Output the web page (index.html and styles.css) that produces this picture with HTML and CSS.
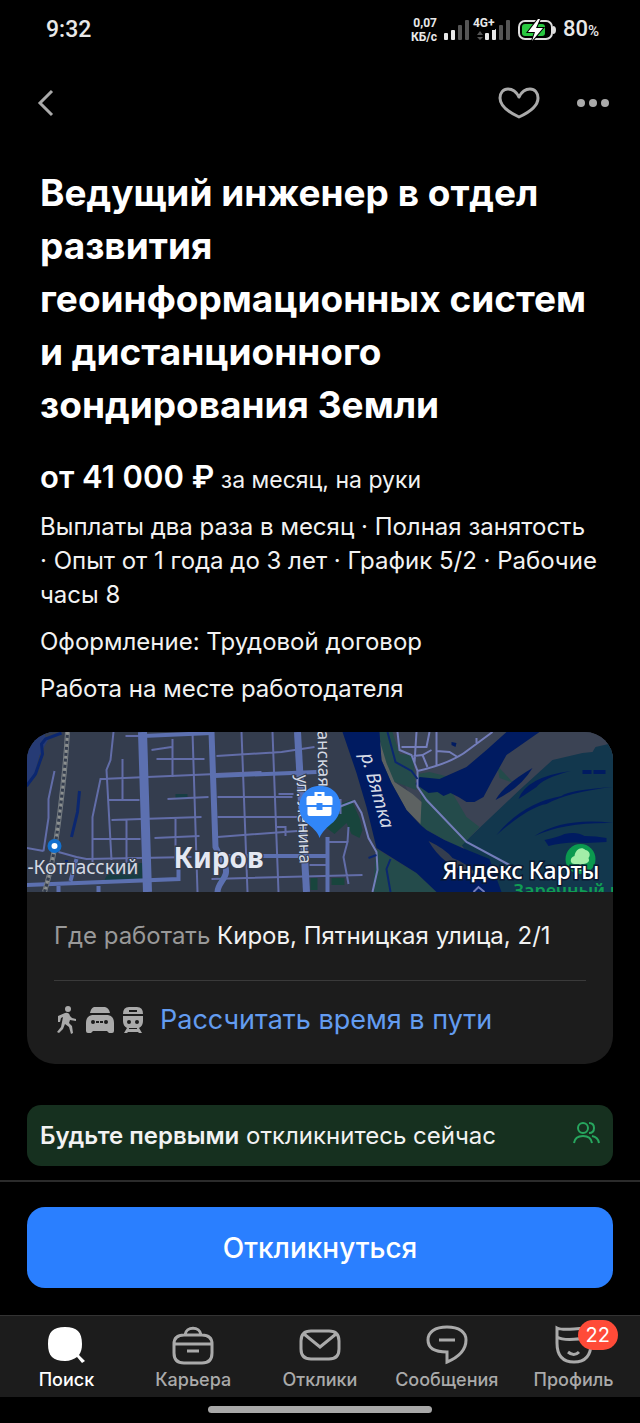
FILE: index.html
```html
<!DOCTYPE html>
<html lang="ru">
<head>
    <meta charset="UTF-8">
    <meta name="viewport" content="width=device-width, initial-scale=1.0">
    <title>Вакансия</title>
    <link rel="stylesheet" href="styles.css">
</head>
<body>
    <!-- status bar -->
    <div class="status">
        <div class="time">9:32</div>
        <div class="status-right">
            <div class="speed">0,07<br>КБ/с</div>
            <svg class="signal" width="26" height="21" viewBox="0 0 26 21">
                <g fill="#e8e8e8"><rect x="0" y="13" width="4" height="7" rx="1"/><rect x="7" y="10" width="4" height="10" rx="1"/></g>
                <g fill="#555"><rect x="14" y="5" width="4" height="15" rx="1"/><rect x="21" y="0" width="4" height="20" rx="1"/></g>
            </svg>
            <div class="lte">
                <span class="lte-label">4G+</span>
                <svg width="34" height="21" viewBox="0 0 34 21">
                    <path d="M0 15l3-4 3 4zM0 17h6l-3 3z" fill="#555"/>
                    <g fill="#e8e8e8"><rect x="8" y="13" width="4" height="7" rx="1"/><rect x="15" y="9" width="4" height="11" rx="1"/></g>
                    <g fill="#555"><rect x="22" y="5" width="4" height="15" rx="1"/><rect x="29" y="0" width="4" height="20" rx="1"/></g>
                </svg>
            </div>
            <svg width="38" height="22" viewBox="0 0 38 22">
                <rect x="1" y="2" width="33" height="18" rx="6" fill="none" stroke="#ddd" stroke-width="2"/>
                <rect x="4" y="5" width="23" height="12" rx="3" fill="#28c840"/>
                <path d="M35 7q3 0 3 4t-3 4z" fill="#ddd"/>
                <path d="M20 0L10 13h7l-3 9 11-13h-7l4-9z" fill="#fff" stroke="#000" stroke-width="2" paint-order="stroke"/>
            </svg>
            <div class="battery">80<small>%</small></div>
        </div>
    </div>

    <!-- header -->
    <header class="topbar">
        <button class="icon-btn" aria-label="Назад">
            <svg width="18" height="28" viewBox="0 0 18 28"><path d="M16 2L4 14l12 12" fill="none" stroke="#aaa" stroke-width="3"/></svg>
        </button>
        <div class="topbar-actions">
            <button class="icon-btn" aria-label="В избранное">
                <svg width="42" height="32" viewBox="0 0 42 32"><path d="M21 10C18 4 14 2 10 2C5 2 2 6 2 11C2 19 10 25 21 30C32 25 40 19 40 11C40 6 37 2 32 2C28 2 24 4 21 10z" fill="none" stroke="#aaa" stroke-width="3" stroke-linejoin="round"/></svg>
            </button>
            <button class="icon-btn" aria-label="Ещё">
                <svg width="32" height="8" viewBox="0 0 32 8" fill="#aaa"><circle cx="4" cy="4" r="4"/><circle cx="16" cy="4" r="4"/><circle cx="28" cy="4" r="4"/></svg>
            </button>
        </div>
    </header>

    <main>
        <section class="info">
            <h1>Ведущий инженер в отдел развития геоинформационных систем и дистанционного зондирования Земли</h1>
            <p class="salary"><strong>от 41 000 ₽</strong> за месяц, на руки</p>
            <p>Выплаты два раза в месяц · Полная занятость ·&nbsp;Опыт от 1 года до 3 лет · График 5/2 · Рабочие часы 8</p>
            <p>Оформление: Трудовой договор</p>
            <p>Работа на месте работодателя</p>
        </section>

        <section class="card">
            <svg class="map" viewBox="0 0 587 160" preserveAspectRatio="xMidYMid slice">
                <rect width="587" height="160" fill="#343d4e"/>
                <path d="M0 0h26L13 23 8 42 0 53z" fill="#263b75"/>
                <path d="M17 0h30L20 7z" fill="#343d4e"/>
                <g fill="none" stroke="#0b2770" stroke-width="3">
                    <path d="M35 1L19 7 15 12 16 22 9 42 0 54"/>
                    <path d="M53 59L51 80 45 105M40 128v6"/>
                </g>
                <path d="M82 140l12-8 22-1v17H78zM149 62h12v4h-12z" fill="#173d43"/>

                <!-- right bank -->
                <path d="M353 0H587V160H460L400 98z" fill="#3b4354"/>
                <path d="M587 11l-18 4-3 5-10 1-30 7-33 30-58 55 35 47h117z" fill="#12374d"/>
                <path d="M471 34l16 17-14-5z" fill="#244b4b"/>
                <path d="M391 42l12-2 20 5-10 4 14 14 13 22 13 10-20 21-33-18-7-6 2-21z" fill="#244b4b"/>
                <path d="M353 0h13l7 22 13 1 4 35-27-10-8-23z" fill="#244b4b"/>
                <path d="M353 8l7 23 8 19 18 12 9 8-1 22-14-14-15-27-10-23z" fill="#5d6262"/>
                <!-- left bank park -->
                <path d="M346 160l4-43 40 24 20 19z" fill="#244b4b"/>
                <!-- river -->
                <path d="M316 0h37l2 28 10 23 15 27 13 14 7 6 18 10 18 8 27 11 12 33h-65l-20-19-40-25-10-41-10-34z" fill="#001b61"/>
                <path d="M480 0h33l-33 23-14 25-9 17-9 5h-8l-8-5-8-4-7 3-6-4-9 1-13-9 4-7 20 2 27-12 20-17z" fill="#001b61"/>
                <path d="M469 68q8-15 37-32-12 20-37 32zM492 67q8-22 52-28-27 7-34 16zM470 103q26-32 65-39 7-6 52-9-45 5-67 17-18 3-50 31zM508 104q30-19 79-13-49-1-79 13zM518 108q14-3 20-6 12-3 20 2 12 0 22 2v4l-20 1q-20-2-38 3zM556 38h9v4h-9zM567 38h12v4h-12zM425 10l5 1-1 4-4-2z" fill="#001b61"/>
                <path d="M402 109q17 8 24 17 14 5 25 17-20-5-32-14-10-8-17-20z" fill="#343d4e"/>
                <path d="M299 95l3-19 23-8 8 18 3 12-3 8-8-4-5-11-12 11z" fill="#18453d"/>
                <path d="M284 146h7v12h-7zM192 145l9-3v5l-9 10zM305 146h13v7h-13z" fill="#18453d"/>

                <!-- streets -->
                <g fill="none" stroke="#626da8" stroke-width="2">
                    <path d="M28 39L22 67v19L17 119M0 116l17 3M32 120l18 5 10 2 105-2"/>
                    <path d="M87 0L84 28l-4 10 5 90M78 47h-4L66 85v48M96 27v41M75 47l160-7M82 68h31M85 88l90-3M66 107h48M100 88v43"/>
                    <path d="M99 4h16M125 18l20-3M130 27h48M146 7v38M166 0l5 160M190 24l65-4 33-5M215 0l6 160M246 0l6 160"/>
                    <path d="M141 67l41-2M191 65h75M149 87v42M128 106l45-2M191 85h80M191 105l80-6M250 95h9v9M252 62h15"/>
                    <path d="M300 68h14v14M301 110h20l-4 15 5 27M283 133h18M322 95l-1 15M185 147l151-4"/>
                </g>
                <g fill="none" stroke="#737dba" stroke-width="2">
                    <path d="M303 82l12-8 13-5 7 12 7 25 8 14 1 18-5 22"/>
                    <path d="M371 0l2 18 12 5 3 8 3 8v16l9 13 40 42 43 23M390 0l-2 31M375 15h25l3-15M387 24l9-1 9-5M396 23l5 12M410 0v33M410 19l13 1 8 5M391 39q35-8 52-22l23-17M450 6v6"/>
                    <path d="M447 160l5-5 6 5"/>
                </g>
                <path d="M361 0l8 30 16 9 6 8M342 126l8-3M364 127l-4 10 4 23" fill="none" stroke="#0b2770" stroke-width="2"/>
                <g fill="none" stroke="#5c70b0">
                    <path d="M116 0l5 160" stroke-width="9"/>
                    <path d="M185 0l4 115 9 18c6 12-7 17-7 27" stroke-width="6"/>
                    <path d="M271 0l9 160" stroke-width="7"/>
                    <path d="M116 4l69-3M0 153l152-6V128M50 127l-6 22M188 44l102-4M200 124h100M301 105v55M32 154v6M72 154v6" stroke-width="4"/>
                </g>
                <path d="M41 0Q39 35 33 83T18 160" fill="none" stroke="#747b80" stroke-width="5"/>
                <path d="M41 0Q39 35 33 83T18 160" fill="none" stroke="#343d4e" stroke-width="3"/>
                <path d="M41 0Q39 35 33 83T18 160" fill="none" stroke="#8c9090" stroke-width="3" stroke-dasharray="3 3"/>
                <circle cx="28" cy="114" r="5" fill="#fff" stroke="#1270ce" stroke-width="4"/>

                <!-- labels -->
                <text class="map-label" x="1" y="142">-Котласский</text>
                <text class="map-city" x="147" y="136">Киров</text>
                <text class="map-label map-street" transform="translate(270 43) rotate(88)">ул. Ленина</text>
                <text class="map-label map-street" text-anchor="end" transform="translate(292 55) rotate(89)">анская</text>
                <text class="map-label map-river" transform="translate(334 23) rotate(74)">р. Вятка</text>
                <path d="M293 106c-2-7-7-10-14-16-7-7-8-17-4-25 7-15 30-15 37 0 4 8 2 18-5 25-7 6-11 9-14 16z" fill="#3186f8"/>
                <g fill="#fff">
                    <path d="M288 64v-4h10v4h-3v-2h-4v2z"/>
                    <path d="M282 64h22q2 0 2 2v7h-10v-2h-6v2h-10v-7q0-2 2-2zM281 75h9v3h6v-3h9v7q0 2-2 2h-20q-2 0-2-2z"/>
                </g>
                <circle cx="554" cy="127" r="15" fill="#0b994f"/>
                <path d="M553 139v-7h-5c-5 0-5-7 0-8 1-7 7-10 11-6 5 1 5 6 3 8 2 4-2 6-7 6v7z" fill="#a2eda8"/>
                <text class="map-park" x="487" y="165">Заречный п</text>
                <text class="map-brand" x="416" y="147">Яндекс Карты</text>
            </svg>
            <div class="card-body">
                <p class="address"><span>Где работать</span> Киров, Пятницкая улица, 2/1</p>
                <a class="route" href="#">
                    <svg width="92" height="28" viewBox="0 0 92 28" fill="#aaa">
                        <circle cx="14" cy="3" r="3"/>
                        <path d="M11 7q4-1 5 3l2 2 4 1v2l-6-1-1 3 3 3 1 7-2 1-2-7-4-3-2 5-4 4-2-1 4-5 2-10-2 1-1 4H4v-6z"/>
                        <path d="M40 1h11q4 1 5 6H36q1-5 4-6zM38 9h16q6 1 6 8v8q0 2-2 2h-3l-2-2H39l-2 2h-3q-2 0-2-2v-8q0-7 6-8z"/>
                        <path d="M75 1h8q6 0 6 7H69q0-7 6-7zM69 10h20v5q0 5-4 7l3 5h-3l-1-1H74l-1 1h-3l3-5q-4-2-4-7z"/>
                        <g fill="#1c1c1c"><circle cx="39" cy="16" r="2"/><circle cx="52" cy="16" r="2"/><path d="M42 15h3v2h-3zM46 15h3v2h-3zM75 4h8v2h-8zM75 22h8v1h-8z"/><circle cx="75" cy="16" r="2"/><circle cx="83" cy="16" r="2"/></g>
                    </svg>
                    Рассчитать время в пути
                </a>
            </div>
        </section>

        <section class="first">
            <p><strong>Будьте первыми</strong> откликнитесь сейчас</p>
            <svg width="28" height="32" viewBox="0 0 28 32" fill="none" stroke="#27a65e" stroke-width="2">
                <circle cx="11" cy="8" r="5"/><path d="M2 23q1-7 9-7t9 7M17 3q5 0 5 5t-5 5M20 16q6 1 7 7"/>
            </svg>
        </section>
    </main>

    <div class="apply">
        <button class="apply-btn">Откликнуться</button>
    </div>

    <nav class="tabs">
        <a class="tab active" href="#">
            <svg width="42" height="40" viewBox="0 0 42 40"><path d="M20 2c12 0 17 5 17 17 0 5-1 8-3 11l6 6-3 2-5-6c-3 2-7 4-12 4C8 36 3 31 3 19S8 2 20 2z" fill="#fff"/></svg>
            Поиск
        </a>
        <a class="tab" href="#">
            <svg width="42" height="40" viewBox="0 0 42 40"><path d="M13 10C14 1 28 1 29 10M2 19h38M15 26h12M12 10h18q10 0 10 9v9q0 10-10 10H12q-10 0-10-10v-9q0-9 10-9z"/></svg>
            Карьера
        </a>
        <a class="tab" href="#">
            <svg width="42" height="40" viewBox="0 0 42 40"><path d="M12 6h18q10 0 10 10v8q0 10-10 10H12q-10 0-10-10v-8q0-10 10-10zM5 9l16 13L37 9"/></svg>
            Отклики
        </a>
        <a class="tab" href="#">
            <svg width="42" height="40" viewBox="0 0 42 40"><path d="M21 2C9 2 2 7 2 15c0 8 6 12 19 12v10c12-5 19-13 19-22C40 7 33 2 21 2zM13 15h16"/></svg>
            Сообщения
        </a>
        <a class="tab" href="#">
            <span class="badge-wrap">
                <svg width="42" height="40" viewBox="0 0 42 40"><path d="M4 3q4 2 17 1t17-1v15q0 19-17 19T4 18zM4 12q8 5 34 0M15 27q6 5 11 0"/></svg>
                <span class="badge">22</span>
            </span>
            Профиль
        </a>
    </nav>
    <div class="home"></div>
</body>
</html>
```
FILE: styles.css
```css
* {
    box-sizing: border-box;
}

body {
    margin: 0;
    min-height: 100vh;
    display: flex;
    flex-direction: column;
    background: #000;
    color: #f2f2f2;
    font-family: Inter, "Liberation Sans", sans-serif;
    font-size: 24px;
    line-height: 34px;
}

h1, p {
    margin: 0;
}

svg {
    display: block;
    flex: none;
}

button {
    border: 0;
    font-family: inherit;
    cursor: pointer;
}

a {
    text-decoration: none;
}

/* status bar */
.status {
    display: flex;
    justify-content: space-between;
    align-items: center;
    height: 58px;
    padding: 2px 41px 0 46px;
    font-family: Roboto, sans-serif;
    font-size: 23px;
    font-weight: 500;
    color: #e8e8e8;
}

.status-right {
    display: flex;
    align-items: center;
    gap: 7px;
}

.speed {
    font-size: 12px;
    line-height: 14px;
    font-weight: 700;
    text-align: right;
}

.lte {
    position: relative;
}

.lte-label {
    position: absolute;
    left: -4px;
    top: -4px;
    font-size: 12px;
    line-height: 14px;
    font-weight: 700;
    background: #000;
}

.battery {
    font-size: 22px;
}

.battery small {
    font-size: 15px;
}

/* header */
.topbar {
    display: flex;
    justify-content: space-between;
    align-items: center;
    height: 90px;
    padding: 0 31px 0 36px;
}

.topbar-actions {
    display: flex;
    align-items: center;
    gap: 37px;
}

.icon-btn {
    padding: 0;
    background: none;
}

main {
    flex: 1;
    padding: 18px 27px 14px;
}

.info {
    display: flex;
    flex-direction: column;
    gap: 13px;
    padding: 0 13px;
}

h1 {
    font-size: 37px;
    line-height: 53px;
    font-weight: 700;
    color: #fff;
}

.salary {
    margin-top: 16px;
    font-size: 23px;
}

.salary strong {
    font-size: 31px;
    font-weight: 600;
    color: #fff;
}

/* map card */
.card {
    margin-top: 26px;
    border-radius: 28px;
    overflow: hidden;
    background: #1c1c1c;
}

.map {
    width: 100%;
    height: 160px;
}

.map-label {
    font: 19px "Noto Sans", sans-serif;
    fill: #d5dae4;
    stroke: #343d4e;
    stroke-width: 2px;
    paint-order: stroke;
}

.map-street {
    font-size: 17px;
}

.map-river {
    font-style: italic;
    stroke: #001b61;
}

.map-city {
    font: 700 28px "Noto Sans", sans-serif;
    fill: #e4e8f2;
    stroke: #343d4e;
    stroke-width: 3px;
    paint-order: stroke;
}

.map-park {
    font: 600 18px "Noto Sans", sans-serif;
    fill: #109c53;
}

.map-brand {
    font: 500 23px "Noto Sans", sans-serif;
    fill: #fff;
    stroke: #0a1830;
    stroke-width: 3px;
    paint-order: stroke;
}

.card-body {
    padding: 0 27px;
}

.address {
    padding: 27px 0;
    border-bottom: 1px solid #3a3a3a;
}

.address span {
    color: #999;
}

.route {
    display: flex;
    align-items: center;
    gap: 14px;
    height: 83px;
    padding-bottom: 5px;
    font-size: 27px;
    color: #639cf0;
}

.first {
    display: flex;
    justify-content: space-between;
    align-items: center;
    height: 61px;
    margin-top: 41px;
    padding: 0 13px;
    border-radius: 14px;
    background: #16301f;
}

.first strong {
    font-weight: 600;
}

/* apply button */
.apply {
    padding: 25px 27px 27px;
    border-top: 2px solid #2b2b2b;
}

.apply-btn {
    width: 100%;
    height: 81px;
    border-radius: 18px;
    background: #2a7fff;
    color: #fff;
    font-size: 28px;
    font-weight: 500;
}

/* bottom tabs */
.tabs {
    display: grid;
    grid-template-columns: repeat(5, 1fr);
    height: 82px;
    padding: 9px 3px 0;
    background: #1c1c1c;
    border-top: 1px solid #333;
}

.tab {
    display: flex;
    flex-direction: column;
    align-items: center;
    gap: 4px;
    color: #aaa;
    font-size: 18px;
    line-height: 22px;
    font-weight: 500;
}

.tab svg {
    fill: none;
    stroke: #aaa;
    stroke-width: 3px;
}

.tab.active {
    color: #fff;
}

.tab.active svg {
    stroke: none;
}

.badge-wrap {
    position: relative;
}

.badge {
    position: absolute;
    left: 25px;
    top: -5px;
    padding: 0 8px;
    border-radius: 15px;
    background: #ff4b38;
    color: #fff;
    font-size: 20px;
    line-height: 30px;
    font-weight: 400;
}

.home {
    width: 35%;
    height: 7px;
    margin: 9px auto 11px;
    border-radius: 4px;
    background: #a8a8a8;
}
```
